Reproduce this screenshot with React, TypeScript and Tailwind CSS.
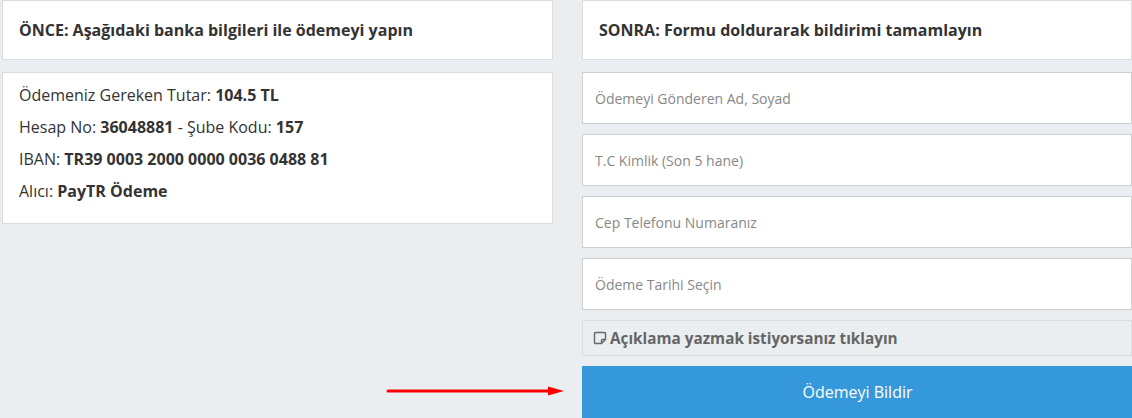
import React from "react";

function NoteIcon() {
  return (
    <svg width="14" height="14" viewBox="0 0 14 14" className="shrink-0">
      <path
        d="M2.5 1.5 H11.5 A1 1 0 0 1 12.5 2.5 V8.5 L8.5 12.5 H2.5 A1 1 0 0 1 1.5 11.5 V2.5 A1 1 0 0 1 2.5 1.5 Z"
        fill="none"
        stroke="#666"
        strokeWidth="1.4"
        strokeLinejoin="round"
      />
      <path d="M12.5 8.5 H9.5 A1 1 0 0 0 8.5 9.5 V12.5" fill="none" stroke="#666" strokeWidth="1.4" />
    </svg>
  );
}

export default function App() {
  const font = { fontFamily: '"Open Sans", "Noto Sans", sans-serif' };
  const inputs = [
    "Ödemeyi Gönderen Ad, Soyad",
    "T.C Kimlik (Son 5 hane)",
    "Cep Telefonu Numaranız",
    "Ödeme Tarihi Seçin",
  ];
  return (
    <div className="w-[1132px] h-[418px] overflow-hidden bg-[#ebeef0] flex text-[#333]" style={font}>
      {/* left column */}
      <div className="ml-[2px] w-[551px] flex flex-col">
        <div className="h-[60px] bg-white border border-[#dcdcdc] flex items-center px-4 text-[16px] font-bold text-[#333]">
          ÖNCE: Aşağıdaki banka bilgileri ile ödemeyi yapın
        </div>
        <div className="mt-[12px] h-[152px] bg-white border border-[#dcdcdc] px-4 pt-[6px] text-[16px] leading-[32px] text-[#333]">
          <div>
            Ödemeniz Gereken Tutar: <b>104.5 TL</b>
          </div>
          <div>
            Hesap No: <b>36048881</b> - Şube Kodu: <b>157</b>
          </div>
          <div>
            IBAN: <b>TR39 0003 2000 0000 0036 0488 81</b>
          </div>
          <div>
            Alıcı: <b>PayTR Ödeme</b>
          </div>
        </div>
        <div className="flex-1 flex items-end justify-end pb-[20px]">
          <svg width="184" height="14" viewBox="0 0 184 14" className="mr-[-15px]">
            <line x1="4" y1="7" x2="168" y2="7" stroke="#ff0000" strokeWidth="3" strokeLinecap="round" />
            <polygon points="164,2.5 180,7 164,11.5" fill="#ff0000" />
          </svg>
        </div>
      </div>
      {/* right column */}
      <div className="ml-[29px] w-[550px] flex flex-col">
        <div className="h-[60px] bg-white border border-[#dcdcdc] flex items-center px-4 text-[16px] font-bold text-[#333]">
          SONRA: Formu doldurarak bildirimi tamamlayın
        </div>
        <div className="mt-[12px] flex flex-col gap-[10px]">
          {inputs.map((p) => (
            <div
              key={p}
              className="h-[52px] bg-white border border-[#cfcfcf] flex items-center px-3 text-[14px] text-[#888]"
            >
              {p}
            </div>
          ))}
          <div className="h-[36px] border border-[#dcdcdc] bg-[#ebeef0] flex items-center gap-[3px] px-[10px] text-[15.3px] font-bold text-[#666]">
            <NoteIcon />
            <span>Açıklama yazmak istiyorsanız tıklayın</span>
          </div>
        </div>
        <div className="mt-[10px] h-[52px] bg-[#3498db] w-[551px] flex items-center justify-center text-white text-[16px]">
          Ödemeyi Bildir
        </div>
      </div>
    </div>
  );
}
